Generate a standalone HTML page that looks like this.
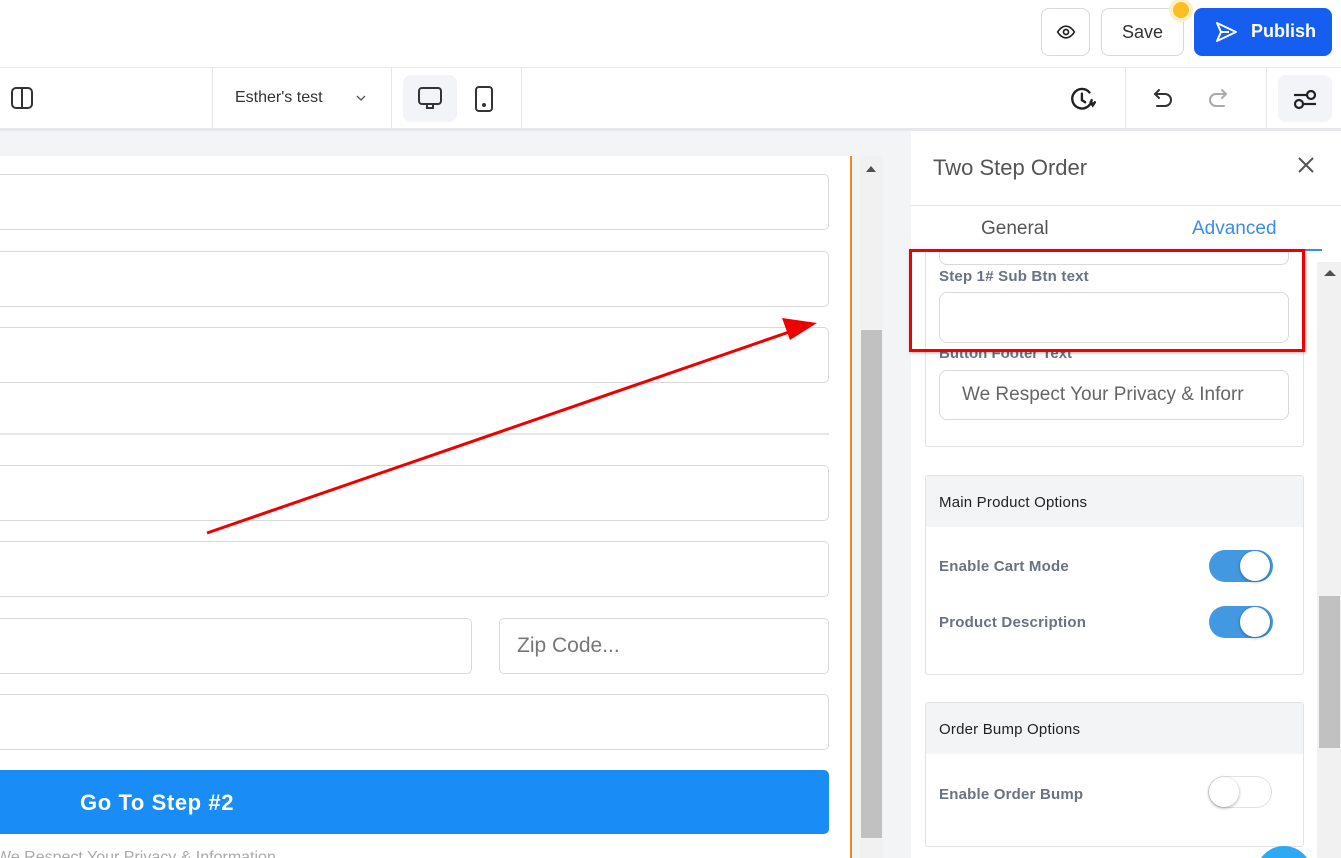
<!DOCTYPE html>
<html style="width:1341px;height:858px;overflow:hidden"><head><meta charset="utf-8">
<style>
*{box-sizing:border-box;margin:0;padding:0}
body{width:1341px;height:858px;overflow:hidden;position:relative;background:#fff;font-family:"Liberation Sans",sans-serif}
.abs{position:absolute}
.inp{position:absolute;border:1px solid #d9d9d9;border-radius:5px;background:#fff}
.sw{position:absolute;width:64px;height:32px;border-radius:16px}
.sw.on{background:#4299e1}
.sw.off{background:#fff;border:1px solid #e2e2e2}
.knob{position:absolute;top:1px;width:30px;height:30px;border-radius:50%;background:#fff;box-shadow:0 1px 3px rgba(0,0,0,.35)}
.lbl{position:absolute;left:939px;font-size:15px;color:#6b7280;font-weight:bold;letter-spacing:0.2px}
</style></head><body>
<!-- top bar -->
<div class="abs" style="left:0;top:67px;width:1341px;height:1px;background:#e5e7eb"></div>
<div class="abs" style="left:1041px;top:8px;width:49px;height:48px;border:1px solid #d8d8d8;border-radius:8px"></div>
<svg class="abs" style="left:1055px;top:22px" width="22" height="20" viewBox="0 0 24 24" fill="none" stroke="#222" stroke-width="2"><path d="M2 12s4-7 10-7 10 7 10 7-4 7-10 7S2 12 2 12z"/><circle cx="12" cy="12" r="3"/></svg>
<div class="abs" style="left:1101px;top:8px;width:83px;height:48px;border:1px solid #d8d8d8;border-radius:8px;font-size:18px;color:#333;text-align:center;line-height:46px">Save</div>
<div class="abs" style="left:1173px;top:2px;width:16px;height:16px;border-radius:50%;background:#fbbf24;box-shadow:0 0 0 4px #fdf0c8"></div>
<div class="abs" style="left:1194px;top:8px;width:138px;height:48px;background:#155eef;border-radius:8px;color:#fff;font-weight:bold;font-size:18px;line-height:46px;padding-left:57px">Publish</div>
<svg class="abs" style="left:1213px;top:20px" width="26" height="24" viewBox="0 0 24 24" fill="none" stroke="#fff" stroke-width="2" stroke-linejoin="round"><path d="M3 3l19 9-19 9 4-9z M7 12h8"/></svg>
<!-- toolbar -->
<div class="abs" style="left:0;top:128px;width:1341px;height:3px;background:#e5e7eb"></div>
<svg class="abs" style="left:10px;top:86px" width="24" height="24" viewBox="0 0 24 24" fill="none" stroke="#333" stroke-width="2"><rect x="2" y="2" width="20" height="20" rx="4"/><path d="M12 2v20"/></svg>
<div class="abs" style="left:212px;top:68px;width:1px;height:60px;background:#e5e7eb"></div>
<div class="abs" style="left:235px;top:89px;font-size:16px;color:#333">Esther's test</div>
<svg class="abs" style="left:355px;top:93px" width="12" height="10" viewBox="0 0 12 10" fill="none" stroke="#555" stroke-width="1.3"><path d="M2 3l4 4 4-4"/></svg>
<div class="abs" style="left:391px;top:68px;width:1px;height:60px;background:#e5e7eb"></div>
<div class="abs" style="left:403px;top:75px;width:54px;height:47px;background:#f2f4f7;border-radius:8px"></div>
<svg class="abs" style="left:417px;top:86px" width="26" height="26" viewBox="0 0 26 26" fill="none" stroke="#333" stroke-width="2"><rect x="2" y="2" width="22" height="16" rx="3"/><path d="M10 18v4h6v-4"/></svg>
<svg class="abs" style="left:473px;top:85px" width="22" height="28" viewBox="0 0 22 28" fill="none" stroke="#333" stroke-width="2"><rect x="3" y="2" width="16" height="24" rx="3"/><circle cx="11" cy="20" r="1" fill="#333"/></svg>
<div class="abs" style="left:521px;top:68px;width:1px;height:60px;background:#e5e7eb"></div>
<svg class="abs" style="left:1069px;top:86px" width="28" height="26" viewBox="0 0 24 24" fill="none" stroke="#222" stroke-width="2.2" stroke-linecap="round"><path d="M20 13a9 9 0 1 1-2-7"/><path d="M11 7v6l3 2"/><path d="M19 15l2 3 2-3" fill="#222"/></svg>
<div class="abs" style="left:1125px;top:68px;width:1px;height:60px;background:#e5e7eb"></div>
<svg class="abs" style="left:1150px;top:86px" width="26" height="24" viewBox="0 0 24 24" fill="none" stroke="#333" stroke-width="2" stroke-linecap="round"><path d="M8 4L4 8l4 4"/><path d="M4 8h10a6 6 0 0 1 0 12H6"/></svg>
<svg class="abs" style="left:1205px;top:86px" width="26" height="24" viewBox="0 0 24 24" fill="none" stroke="#aaa" stroke-width="2" stroke-linecap="round"><path d="M16 4l4 4-4 4"/><path d="M20 8H10a6 6 0 0 0 0 12h8"/></svg>
<div class="abs" style="left:1266px;top:68px;width:1px;height:60px;background:#e5e7eb"></div>
<div class="abs" style="left:1278px;top:75px;width:54px;height:47px;background:#f2f4f7;border-radius:8px"></div>
<svg class="abs" style="left:1291px;top:86px" width="28" height="26" viewBox="0 0 28 26" fill="none" stroke="#222" stroke-width="2.2"><path d="M3 9h13"/><circle cx="20" cy="9" r="4"/><path d="M12 18h13"/><circle cx="8" cy="18" r="4"/></svg>
<!-- canvas -->
<div class="abs" style="left:0;top:131px;width:911px;height:727px;background:#f3f4f6"></div>
<div class="abs" style="left:0;top:156px;width:850px;height:702px;background:#fff"></div>
<div class="abs" style="left:850px;top:156px;width:2px;height:702px;background:#f08a24"></div>
<div class="abs" style="left:860px;top:156px;width:23px;height:702px;background:#f1f1f1"></div>
<div class="abs" style="left:861px;top:330px;width:21px;height:508px;background:#c1c1c1"></div>
<div class="abs" style="left:866px;top:166px;width:0;height:0;border-left:5px solid transparent;border-right:5px solid transparent;border-bottom:6px solid #505050"></div>
<div class="inp" style="left:-10px;top:174px;width:839px;height:56px"></div>
<div class="inp" style="left:-10px;top:251px;width:839px;height:56px"></div>
<div class="inp" style="left:-10px;top:327px;width:839px;height:56px"></div>
<div class="abs" style="left:0;top:433px;width:829px;height:2px;background:#e8e8e8"></div>
<div class="inp" style="left:-10px;top:465px;width:839px;height:56px"></div>
<div class="inp" style="left:-10px;top:541px;width:839px;height:56px"></div>
<div class="inp" style="left:-10px;top:618px;width:482px;height:56px"></div>
<div class="inp" style="left:499px;top:618px;width:330px;height:56px;font-size:21px;color:#777;padding-left:17px;line-height:54px">Zip Code...</div>
<div class="inp" style="left:-10px;top:694px;width:839px;height:56px"></div>
<div class="abs" style="left:-10px;top:770px;width:839px;height:64px;background:#1a8cf5;border-radius:5px;color:#fff;font-weight:bold;font-size:22px;line-height:66px;padding-left:90px;letter-spacing:0.6px">Go To Step #2</div>
<div class="abs" style="left:-4px;top:848px;width:850px;height:10px;overflow:hidden;font-size:16px;line-height:20px;color:#aaa;white-space:nowrap">We Respect Your Privacy &amp; Information</div>
<!-- panel -->
<div class="abs" style="left:911px;top:131px;width:430px;height:727px;background:#fff"></div>
<div class="abs" style="left:933px;top:155px;font-size:22px;color:#555">Two Step Order</div>
<svg class="abs" style="left:1296px;top:155px" width="20" height="20" viewBox="0 0 20 20" stroke="#555" stroke-width="2"><path d="M3 3l14 14M17 3L3 17"/></svg>
<div class="abs" style="left:911px;top:205px;width:430px;height:1px;background:#e5e7eb"></div>
<div class="abs" style="left:981px;top:218px;font-size:19px;color:#555">General</div>
<div class="abs" style="left:1192px;top:218px;font-size:19px;color:#3a8ee6">Advanced</div>
<div class="abs" style="left:1160px;top:249px;width:162px;height:2px;background:#3a8ee6"></div>
<div class="abs" style="left:1317px;top:262px;width:24px;height:596px;background:#f1f1f1"></div>
<div class="abs" style="left:1319px;top:596px;width:21px;height:152px;background:#c1c1c1"></div>
<div class="abs" style="left:1324px;top:270px;width:0;height:0;border-left:6px solid transparent;border-right:6px solid transparent;border-bottom:6px solid #505050"></div>
<!-- advanced card -->
<div class="abs" style="left:925px;top:250px;width:379px;height:197px;border:1px solid #e2e2e2;border-top:none;border-radius:0 0 3px 3px"></div>
<div class="abs" style="left:939px;top:250px;width:350px;height:15px;border:1px solid #d9d9d9;border-top:none;border-radius:0 0 8px 8px"></div>
<div class="lbl" style="top:268px;font-size:15px">Step 1# Sub Btn text</div>
<div class="inp" style="left:939px;top:292px;width:350px;height:51px;border-radius:8px"></div>
<div class="abs" style="left:939px;top:352px;width:300px;height:10px;overflow:hidden"><div style="position:relative;top:-6px;font-size:15px;line-height:15px;color:#6b7280;font-weight:bold;white-space:nowrap">Button Footer Text</div></div>
<div class="inp" style="left:939px;top:370px;width:350px;height:50px;border-radius:8px;font-size:19px;color:#666;padding-left:22px;line-height:48px;overflow:hidden;white-space:nowrap">We Respect Your Privacy &amp; Inforr</div>
<!-- main product -->
<div class="abs" style="left:925px;top:475px;width:379px;height:200px;border:1px solid #e2e2e2;border-radius:3px"></div>
<div class="abs" style="left:926px;top:476px;width:377px;height:51px;background:#f3f4f6;font-size:15px;color:#222;padding:18px 0 0 13px;letter-spacing:0.2px">Main Product Options</div>
<div class="lbl" style="top:558px">Enable Cart Mode</div>
<div class="sw on" style="left:1209px;top:550px"><div class="knob" style="left:31px;top:1px"></div></div>
<div class="lbl" style="top:614px">Product Description</div>
<div class="sw on" style="left:1209px;top:606px"><div class="knob" style="left:31px;top:1px"></div></div>
<!-- order bump -->
<div class="abs" style="left:925px;top:702px;width:379px;height:145px;border:1px solid #e2e2e2;border-radius:3px"></div>
<div class="abs" style="left:926px;top:703px;width:377px;height:51px;background:#f3f4f6;font-size:15px;color:#222;padding:18px 0 0 13px;letter-spacing:0.2px">Order Bump Options</div>
<div class="lbl" style="top:786px">Enable Order Bump</div>
<div class="sw off" style="left:1208px;top:776px"><div class="knob" style="left:0;top:0"></div></div>
<svg class="abs" style="left:1256px;top:846px" width="56" height="12"><circle cx="28" cy="28" r="28" fill="#2eaaf5"/></svg>
<!-- annotations -->
<div class="abs" style="left:909px;top:249px;width:396px;height:103px;border:3px solid #e00;box-shadow:1px 1px 3px rgba(0,0,0,.3)"></div>
<svg class="abs" style="left:0;top:0" width="1341" height="858"><line x1="207" y1="533" x2="795" y2="330" stroke="#e00" stroke-width="3"/><polygon points="817,323 790,340 782,318" fill="#e00"/></svg>
</body></html>
